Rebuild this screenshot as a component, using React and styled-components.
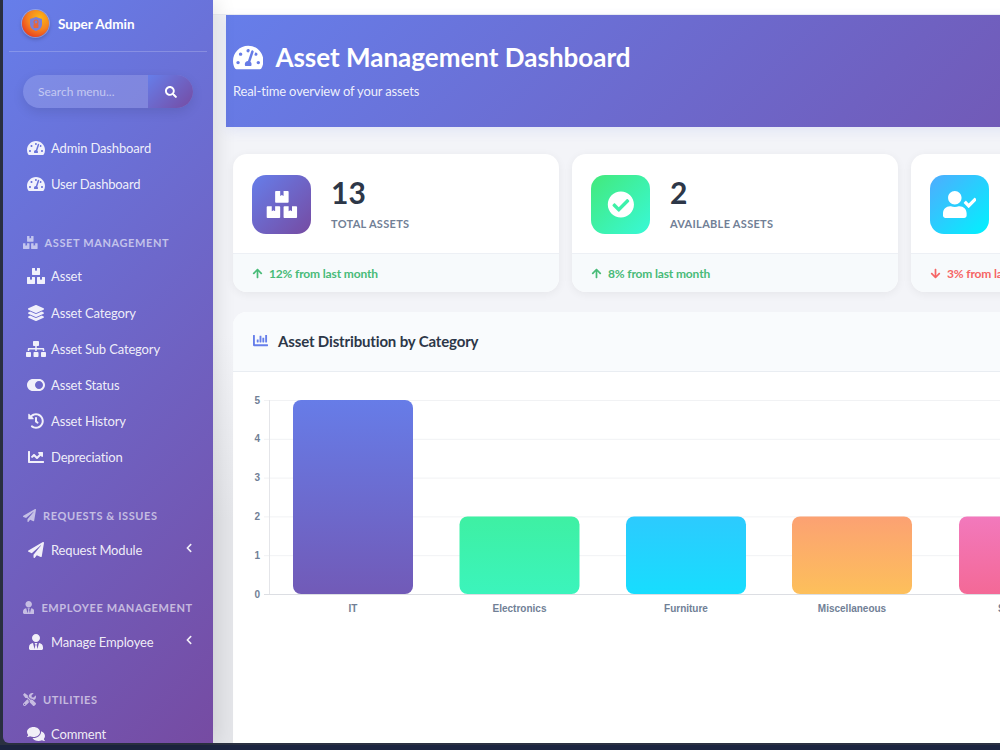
import React from "react";
import styled, { createGlobalStyle } from "styled-components";
import {
  FaTachometerAlt, FaBoxes, FaLayerGroup, FaSitemap, FaToggleOn, FaHistory, FaChartLine,
  FaPaperPlane, FaUserTie, FaTools, FaComments, FaSearch, FaChevronLeft, FaArrowUp, FaArrowDown,
  FaCheckCircle, FaUserCheck, FaChartBar,
} from "react-icons/fa";

const FONT = `"Lato", "Noto Sans", sans-serif`;

const Global = createGlobalStyle`
  html, body { margin: 0; padding: 0; height: 100%; overflow: hidden; background: #1d2540; }
  * { box-sizing: border-box; }
  body { font-family: ${FONT}; }
`;

const Frame = styled.div`
  width: 1000px; height: 750px; overflow: hidden; display: flex; flex-direction: column;
  background: #1c2440;
`;
const Window = styled.div`
  height: 745px; flex: none; display: flex; background: #2b3142; padding: 0 0 2px 3px;
`;
const Sidebar = styled.aside`
  width: 210px; flex: none; height: 743px; overflow: hidden; position: relative; z-index: 2;
  background: linear-gradient(135deg, #667eea 0%, #764ba2 100%);
  border-bottom-left-radius: 6px; color: #fff;
  box-shadow: 4px 0 20px rgba(0,0,0,.1);
`;
const Brand = styled.div`
  height: 52px; margin: 0 6px; padding: 0 0 4px 13px; display: flex; align-items: center; gap: 9px;
  border-bottom: 1px solid rgba(255,255,255,.2);
`;
const Avatar = styled.div`
  width: 27px; height: 27px; border-radius: 50%; display: flex; align-items: center; justify-content: center;
  background: radial-gradient(circle at 65% 30%, #fdb813 0%, #f58220 45%, #e8341c 85%);
  box-shadow: 0 0 0 1px rgba(255,255,255,.3), 0 2px 4px rgba(0,0,0,.25);
`;
const BrandName = styled.span`font-size: 13.5px; font-weight: 700;`;
const SearchBox = styled.form`
  margin: 23px 20px 0; height: 33px; display: flex; border-radius: 17px; overflow: hidden;
  box-shadow: 0 4px 12px rgba(0,0,0,.1); background: rgba(255,255,255,.15);
`;
const SearchInput = styled.input`
  flex: 1; min-width: 0; border: 0; background: transparent; outline: none; padding: 0 0 0 15px;
  font: 12px ${FONT}; color: #fff;
  &::placeholder { color: rgba(255,255,255,.55); }
`;
const SearchButton = styled.button`
  width: 45px; flex: none; border: 0; color: #fff; font-size: 12px; padding: 0;
  display: flex; align-items: center; justify-content: center;
  background: linear-gradient(135deg, #667eea 0%, #764ba2 100%);
`;
const Nav = styled.nav`display: flex; flex-direction: column; padding-top: 22px;`;
const Group = styled.div`display: flex; flex-direction: column; margin-bottom: 24px;`;
const SectionTitle = styled.div`
  height: 31px; margin-top: 1px; padding: 0 0 1px 20px; display: flex; align-items: center; gap: 7px;
  font-size: 11px; font-weight: 700; letter-spacing: .6px; text-transform: uppercase; white-space: nowrap;
  color: rgba(255,255,255,.6);
`;
const SectionIcon = styled.span`
  width: ${p => p.$w}px; flex: none; display: flex;
  svg { width: 100%; height: 13px; }
`;
const Item = styled.a`
  height: 36.2px; padding: 0 19px 0 24px; display: flex; align-items: center; gap: 7px;
  font-size: 13px; letter-spacing: -.15px; color: rgba(255,255,255,.9);
`;
const ItemIcon = styled.span`
  width: 17px; flex: none; display: flex; justify-content: center; font-size: 16px;
  svg { width: 1.25em; height: 1em; flex: none; }
`;
const ItemLabel = styled.span`flex: 1; white-space: nowrap;`;
const Caret = styled(FaChevronLeft)`font-size: 10px; margin-top: -3px; flex: none;`;

const Main = styled.main`
  flex: 1; min-width: 0; overflow: hidden;
  background: linear-gradient(180deg, #f3f4f8 45%, #e4e5e9 70%);
`;
const TopBar = styled.div`height: 15px; background: #fff; border-bottom: 1px solid #eceef2;`;
const Hero = styled.header`
  width: 1150px; margin: 0 0 0 13px; height: 112px; padding: 22px 0 0 7px; color: #fff;
  background: linear-gradient(135deg, #667eea 0%, #764ba2 100%);
  box-shadow: 0 4px 12px rgba(102,126,234,.12);
`;
const HeroTitle = styled.h1`
  margin: 0; display: flex; align-items: center; gap: 12px; font-size: 26px; font-weight: 700; line-height: 40px;
  svg { font-size: 27px; width: 1.125em; height: 1em; flex: none; }
`;
const HeroSub = styled.p`margin: 4px 0 0; font-size: 13px; letter-spacing: -.15px; line-height: 20px; color: rgba(255,255,255,.9);`;
const Content = styled.div`padding: 27px 0 0 20px; width: 1400px;`;
const Cards = styled.div`display: flex; gap: 13px;`;
const Card = styled.section`
  width: 326px; height: 138px; border-radius: 14px; background: #fff; overflow: hidden;
  box-shadow: 0 2px 10px rgba(0,0,0,.06); display: flex; flex-direction: column;
`;
const CardBody = styled.div`height: 99px; flex: none; padding: 21px 19px 0; display: flex; gap: 21px;`;
const CardIcon = styled.div`
  width: 59px; height: 59px; border-radius: 14px; color: #fff; font-size: 27px; flex: none;
  display: flex; align-items: center; justify-content: center; background: ${p => p.$bg};
  svg { width: 1.25em; height: 1em; flex: none; }
`;
const CardText = styled.div`margin: -1px 0 0 -1px;`;
const CardNumber = styled.div`font-size: 30px; font-weight: 700; line-height: 36px; color: #2d3748;`;
const CardLabel = styled.div`
  margin-top: 7px; font-size: 11px; font-weight: 700; letter-spacing: .3px; text-transform: uppercase; color: #718096;
`;
const CardFoot = styled.div`
  flex: 1; background: #f7fafc; border-top: 1px solid #edf0f5; padding-left: 19px;
  display: flex; align-items: center; gap: 6px; font-size: 12px; letter-spacing: -.15px; font-weight: 700;
  color: ${p => p.$down ? "#f56565" : "#48bb78"};
  svg { font-size: 11px; }
`;
const ChartCard = styled.section`
  margin-top: 20px; width: 1300px; height: 520px; background: #fff; border-radius: 14px 0 0 0; overflow: hidden;
`;
const ChartHead = styled.div`
  height: 60px; padding: 0 0 2px 20px; display: flex; align-items: center; gap: 10px;
  background: #f9fbfd; border-bottom: 1px solid #e9edf2;
  font-size: 15px; letter-spacing: -.15px; font-weight: 700; color: #2d3748;
  svg { color: #667eea; font-size: 15px; }
`;
const ChartSvg = styled.svg`display: block;`;
const AxisText = styled.text`
  font: bold 10px "Liberation Sans", Arial, sans-serif; fill: #718096;
`;

const Logo = () => (
  <svg width="14" height="16" viewBox="0 0 14 16">
    <path d="M7 1 L13 3 V8 C13 12 10 14 7 15 C4 14 1 12 1 8 V3 Z" fill="#7b7fd6" />
    <circle cx="7" cy="6" r="2" fill="none" stroke="#e8663a" strokeWidth="1.2" />
    <rect x="4.5" y="8" width="5" height="4" rx="1" fill="#e8663a" />
  </svg>
);

const groups = [
  { items: [[FaTachometerAlt, "Admin Dashboard"], [FaTachometerAlt, "User Dashboard"]] },
  { title: "Asset Management", icon: FaBoxes, w: 14.6, items: [[FaBoxes, "Asset"], [FaLayerGroup, "Asset Category"], [FaSitemap, "Asset Sub Category"], [FaToggleOn, "Asset Status"], [FaHistory, "Asset History"], [FaChartLine, "Depreciation"]] },
  { title: "Requests & Issues", icon: FaPaperPlane, w: 13, items: [[FaPaperPlane, "Request Module", true]] },
  { title: "Employee Management", icon: FaUserTie, w: 11.4, items: [[FaUserTie, "Manage Employee", true]] },
  { title: "Utilities", icon: FaTools, w: 13, items: [[FaComments, "Comment"]] },
];

const cards = [
  { n: "13", label: "Total Assets", foot: "12% from last month", Icon: FaBoxes, bg: "linear-gradient(135deg,#667eea,#764ba2)" },
  { n: "2", label: "Available Assets", foot: "8% from last month", Icon: FaCheckCircle, bg: "linear-gradient(135deg,#43e97b,#38f9d7)" },
  { n: "11", label: "Assigned Assets", foot: "3% from last month", Icon: FaUserCheck, bg: "linear-gradient(135deg,#4facfe,#00f2fe)", down: true },
];

const bars = [
  { x: 60, v: 5, label: "IT", c: ["#667eea", "#764ba2"] },
  { x: 226.5, v: 2, label: "Electronics", c: ["#43e97b", "#38f9d7"] },
  { x: 393, v: 2, label: "Furniture", c: ["#4facfe", "#00f2fe"] },
  { x: 559, v: 2, label: "Miscellaneous", c: ["#fa709a", "#fee140"] },
  { x: 726, v: 2, label: "Software", c: ["#f093fb", "#f5576c"] },
];
const OX = 36, Y0 = 222, UNIT = 38.8;

const Chart = () => (
  <ChartSvg width="900" height="300" viewBox="0 0 900 300">
    <defs>
      {bars.map((b, i) => (
        <linearGradient key={i} id={`g${i}`} gradientUnits="userSpaceOnUse" x1="0" x2="0" y1="18" y2="308">
          <stop offset="0" stopColor={b.c[0]} />
          <stop offset="1" stopColor={b.c[1]} />
        </linearGradient>
      ))}
    </defs>
    {[0, 1, 2, 3, 4, 5].map(v => {
      const y = Y0 - v * UNIT;
      return (
        <g key={v}>
          <line x1={OX - 5} x2="900" y1={y + .5} y2={y + .5} stroke={v === 0 ? "#dcdee3" : "#f1f2f4"} />
          <AxisText x={OX - 9} y={y + 3.5} textAnchor="end">{v}</AxisText>
        </g>
      );
    })}
    <line x1={OX + .5} x2={OX + .5} y1={Y0 - 5 * UNIT} y2={Y0} stroke="#e4e5e9" />
    {bars.map((b, i) => (
      <g key={i}>
        <rect x={b.x} y={Y0 - b.v * UNIT} width="120" height={b.v * UNIT} rx="8" fill={`url(#g${i})`} />
        <AxisText x={b.x + 60} y={Y0 + 18} textAnchor="middle">{b.label}</AxisText>
      </g>
    ))}
  </ChartSvg>
);

export default function App() {
  return (
    <Frame>
      <Global />
      <Window>
        <Sidebar>
          <Brand>
            <Avatar><Logo /></Avatar>
            <BrandName>Super Admin</BrandName>
          </Brand>
          <SearchBox onSubmit={e => e.preventDefault()}>
            <SearchInput placeholder="Search menu..." />
            <SearchButton type="button"><FaSearch /></SearchButton>
          </SearchBox>
          <Nav>
            {groups.map((g, i) => (
              <Group key={i}>
                {g.title && <SectionTitle><SectionIcon $w={g.w}><g.icon /></SectionIcon>{g.title}</SectionTitle>}
                {g.items.map(([Icon, label, caret]) => (
                  <Item key={label}>
                    <ItemIcon><Icon /></ItemIcon>
                    <ItemLabel>{label}</ItemLabel>
                    {caret && <Caret />}
                  </Item>
                ))}
              </Group>
            ))}
          </Nav>
        </Sidebar>
        <Main>
          <TopBar />
          <Hero>
            <HeroTitle><FaTachometerAlt />Asset Management Dashboard</HeroTitle>
            <HeroSub>Real-time overview of your assets</HeroSub>
          </Hero>
          <Content>
            <Cards>
              {cards.map(c => (
                <Card key={c.label}>
                  <CardBody>
                    <CardIcon $bg={c.bg}><c.Icon /></CardIcon>
                    <CardText>
                      <CardNumber>{c.n}</CardNumber>
                      <CardLabel>{c.label}</CardLabel>
                    </CardText>
                  </CardBody>
                  <CardFoot $down={c.down}>
                    {c.down ? <FaArrowDown /> : <FaArrowUp />}
                    {c.foot}
                  </CardFoot>
                </Card>
              ))}
            </Cards>
            <ChartCard>
              <ChartHead><FaChartBar />Asset Distribution by Category</ChartHead>
              <Chart />
            </ChartCard>
          </Content>
        </Main>
      </Window>
    </Frame>
  );
}
